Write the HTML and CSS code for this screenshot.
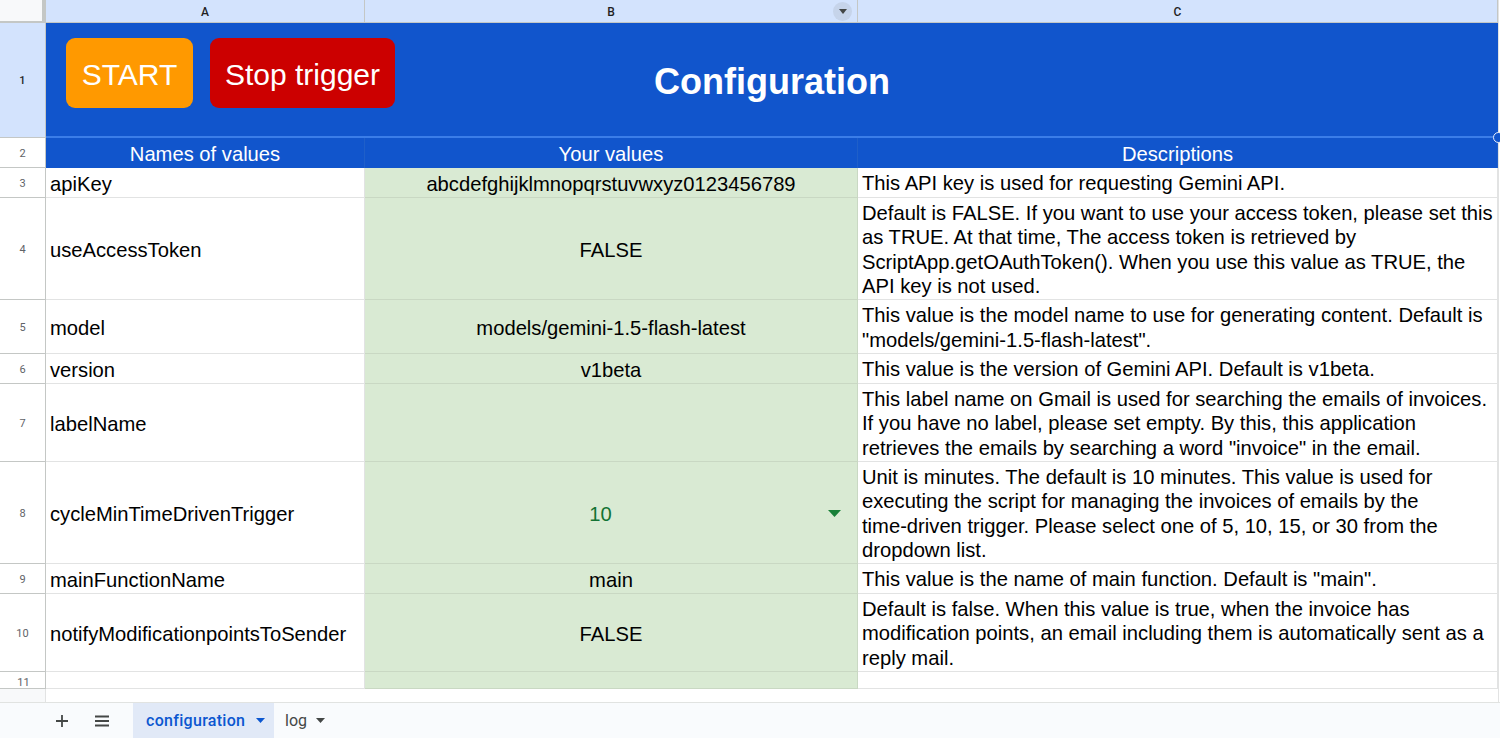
FILE: index.html
```html
<!DOCTYPE html>
<html>
<head>
<meta charset="utf-8">
<title>Configuration</title>
<link rel="stylesheet" href="styles.css">
</head>
<body>
<div class="sheet">
  <div class="corner"></div>
  <div class="colhead">A</div>
  <div class="colhead colhead-b">B<span class="colmenu"><svg width="8" height="5" viewBox="0 0 8 5"><path d="M0 0h8L4 5z" fill="#444746"/></svg></span></div>
  <div class="colhead">C</div>

  <div class="rowhead rowhead-sel">1</div>
  <div class="title-cell">
    <div class="buttons">
      <div class="btn btn-start">START</div>
      <div class="btn btn-stop">Stop trigger</div>
    </div>
    <div class="title">Configuration</div>
    <span class="handle"></span>
  </div>

  <div class="rowhead">2</div>
  <div class="cell head">Names of values</div>
  <div class="cell head">Your values</div>
  <div class="cell head">Descriptions</div>

  <div class="rowhead">3</div>
  <div class="cell name">apiKey</div>
  <div class="cell val">abcdefghijklmnopqrstuvwxyz0123456789</div>
  <div class="cell desc">This API key is used for requesting Gemini API.</div>

  <div class="rowhead">4</div>
  <div class="cell name">useAccessToken</div>
  <div class="cell val">FALSE</div>
  <div class="cell desc">Default is FALSE. If you want to use your access token, please set this<br>as TRUE. At that time, The access token is retrieved by<br>ScriptApp.getOAuthToken(). When you use this value as TRUE, the<br>API key is not used.</div>

  <div class="rowhead">5</div>
  <div class="cell name">model</div>
  <div class="cell val">models/gemini-1.5-flash-latest</div>
  <div class="cell desc">This value is the model name to use for generating content. Default is<br>"models/gemini-1.5-flash-latest".</div>

  <div class="rowhead">6</div>
  <div class="cell name">version</div>
  <div class="cell val">v1beta</div>
  <div class="cell desc">This value is the version of Gemini API. Default is v1beta.</div>

  <div class="rowhead">7</div>
  <div class="cell name">labelName</div>
  <div class="cell val"></div>
  <div class="cell desc">This label name on Gmail is used for searching the emails of invoices.<br>If you have no label, please set empty. By this, this application<br>retrieves the emails by searching a word "invoice" in the email.</div>

  <div class="rowhead">8</div>
  <div class="cell name">cycleMinTimeDrivenTrigger</div>
  <div class="cell val val-dropdown"><span class="dd-value">10</span><svg class="dd-arrow" width="13" height="7" viewBox="0 0 13 7"><path d="M0 0h13L6.5 7z" fill="#188038"/></svg></div>
  <div class="cell desc">Unit is minutes. The default is 10 minutes. This value is used for<br>executing the script for managing the invoices of emails by the<br>time-driven trigger. Please select one of 5, 10, 15, or 30 from the<br>dropdown list.</div>

  <div class="rowhead">9</div>
  <div class="cell name">mainFunctionName</div>
  <div class="cell val">main</div>
  <div class="cell desc">This value is the name of main function. Default is "main".</div>

  <div class="rowhead">10</div>
  <div class="cell name">notifyModificationpointsToSender</div>
  <div class="cell val">FALSE</div>
  <div class="cell desc">Default is false. When this value is true, when the invoice has<br>modification points, an email including them is automatically sent as a<br>reply mail.</div>

  <div class="rowhead rowhead-last">11</div>
  <div class="cell"></div>
  <div class="cell val"></div>
  <div class="cell"></div>

  <div class="gap-head"></div>
  <div class="gap-row"></div>
</div>

<div class="tabbar">
  <div class="tab-icon"><svg width="14" height="14" viewBox="0 0 14 14"><path d="M7 1v12M1 7h12" stroke="#444746" stroke-width="1.8"/></svg></div>
  <div class="tab-icon"><svg width="16" height="12" viewBox="0 0 16 12"><path d="M1 1.5h14M1 6h14M1 10.5h14" stroke="#444746" stroke-width="1.8"/></svg></div>
  <div class="tab tab-active">configuration<svg width="9" height="5" viewBox="0 0 9 5"><path d="M0 0h9L4.5 5z" fill="#0b57d0"/></svg></div>
  <div class="tab">log<svg width="9" height="5" viewBox="0 0 9 5"><path d="M0 0h9L4.5 5z" fill="#444746"/></svg></div>
</div>
</body>
</html>
```
FILE: styles.css
```css
html, body {
  margin: 0;
  padding: 0;
  background: #ffffff;
  overflow: hidden;
  width: 1500px;
  height: 738px;
}

.sheet {
  display: grid;
  grid-template-columns: 46px 319px 493px 640px;
  grid-template-rows: 23px 115px 30px 30px 102px 54px 30px 78px 102px 30px 78px 17px 13px;
  width: 1498px;
  font-family: "Liberation Sans", Arial, sans-serif;
  font-size: 20.2px;
  color: #000;
  border-right: 1px solid #e2e3e3;
}

.corner {
  box-sizing: border-box;
  background: #f8f9fa;
  border-right: 4px solid #c4c7c5;
  border-bottom: 2px solid #c4c7c5;
}

.colhead {
  box-sizing: border-box;
  background: #d3e3fd;
  border-right: 1px solid #c4c7c5;
  border-bottom: 1px solid #c4c7c5;
  display: flex;
  align-items: center;
  justify-content: center;
  padding-top: 2px;
  font-family: Roboto, "Liberation Sans", sans-serif;
  font-size: 12px;
  font-weight: 500;
  color: #1f1f1f;
  position: relative;
}

.colmenu {
  position: absolute;
  right: 5px;
  top: 2px;
  width: 19px;
  height: 19px;
  border-radius: 50%;
  background: #c6d4ea;
  display: flex;
  align-items: center;
  justify-content: center;
}

.rowhead {
  box-sizing: border-box;
  background: #ffffff;
  border-right: 1px solid #c4c7c5;
  border-bottom: 1px solid #c4c7c5;
  display: flex;
  align-items: center;
  justify-content: center;
  padding-top: 1px;
  font-family: Roboto, "Liberation Sans", sans-serif;
  font-size: 11px;
  color: #5f6368;
}

.rowhead-sel {
  background: #d3e3fd;
  color: #1f1f1f;
  font-weight: 500;
}

.rowhead-last {
  padding: 5px 0 0 2px;
  line-height: 12px;
}

.title-cell {
  grid-column: 2 / span 3;
  box-sizing: border-box;
  background: #1155cc;
  border-bottom: 2px solid #3b7de8;
  position: relative;
  display: flex;
  align-items: center;
  justify-content: center;
}

.title {
  color: #ffffff;
  font-weight: bold;
  font-size: 36px;
  padding-top: 5px;
}

.buttons {
  position: absolute;
  left: 20px;
  top: 15px;
  display: flex;
  gap: 17px;
}

.btn {
  height: 70px;
  border-radius: 9px;
  color: #ffffff;
  font-size: 30px;
  display: flex;
  align-items: center;
  justify-content: center;
  padding-top: 3px;
  box-sizing: border-box;
}

.btn-start {
  width: 127px;
  background: #ff9900;
}

.btn-stop {
  width: 185px;
  background: #cc0000;
}

.handle {
  position: absolute;
  right: -6px;
  bottom: -7px;
  width: 9px;
  height: 9px;
  border-radius: 50%;
  background: #1155cc;
  border: 1.5px solid #e8eefb;
}

.cell {
  box-sizing: border-box;
  border-right: 1px solid #e2e3e3;
  border-bottom: 1px solid #e2e3e3;
  display: flex;
  align-items: center;
  padding-top: 3px;
  white-space: nowrap;
  overflow: hidden;
}

.head {
  background: #1155cc;
  color: #ffffff;
  justify-content: center;
  border-right-color: #1f5fc9;
  border-bottom: 0;
  padding-top: 2px;
}

.name {
  padding-left: 4px;
}

.val {
  background: #d9ead3;
  justify-content: center;
  border-right-color: #c9d8c3;
  border-bottom-color: #c9d8c3;
}

.val-dropdown {
  padding: 3px 16px 0 8px;
}

.dd-value {
  flex: 1;
  text-align: center;
  color: #137333;
}

.dd-arrow {
  flex: none;
  margin-top: -2px;
}

.desc {
  padding-left: 4px;
  padding-top: 2px;
  line-height: 24.3px;
}

.gap-head {
  background: #f8f9fa;
  border-right: 1px solid #e2e3e3;
}

.gap-row {
  grid-column: 2 / span 3;
  background: #ffffff;
}

.tabbar {
  box-sizing: border-box;
  height: 36px;
  width: 1500px;
  background: #f9fbfd;
  border-top: 1px solid #e1e3e1;
  display: flex;
  align-items: stretch;
  padding-left: 47px;
  font-family: Roboto, "Liberation Sans", sans-serif;
  font-size: 16px;
}

.tab-icon {
  width: 29px;
  display: flex;
  align-items: center;
  justify-content: center;
  margin-right: 11px;
}

.tab-icon + .tab-icon {
  margin-right: 17px;
}

.tab {
  display: flex;
  align-items: center;
  gap: 9px;
  padding: 0 12px 0 11px;
  color: #444746;
}

.tab svg {
  flex: none;
}

.tab-active {
  background: #e1e9f7;
  color: #0b57d0;
  font-weight: 500;
  letter-spacing: 0.3px;
  width: 141px;
  padding-left: 13px;
  box-sizing: border-box;
}

.tab-active svg {
  margin-left: 2px;
}
```
